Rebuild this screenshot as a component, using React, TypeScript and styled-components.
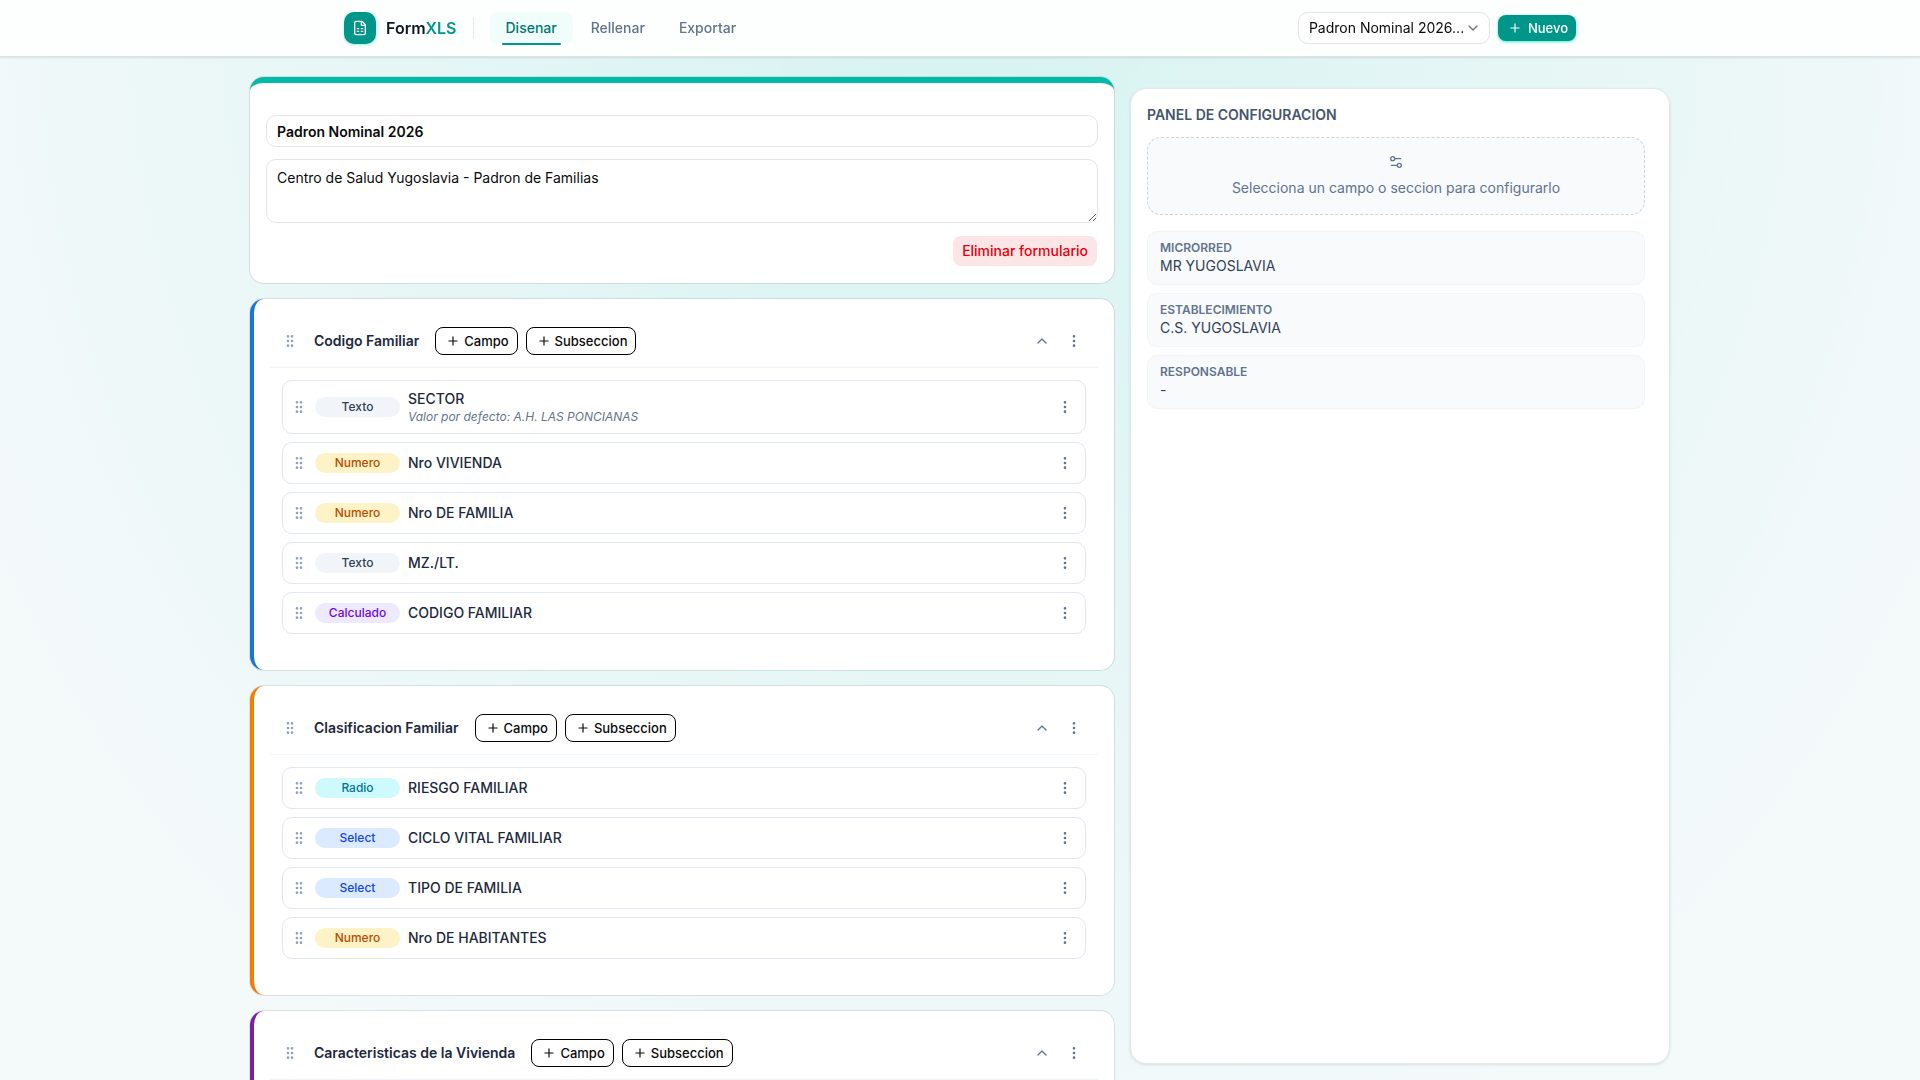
import React from "react";
import styled, { createGlobalStyle } from "styled-components";
import { ChevronDown, ChevronUp, EllipsisVertical, FileSpreadsheet, GripVertical, Plus, Settings2 } from "lucide-react";

const GlobalStyle = createGlobalStyle`
  *, *::before, *::after { box-sizing: border-box; }
  body {
    margin: 0;
    min-height: 100vh;
    color: #1d293d;
    font: 400 14px/20px Inter, "Liberation Sans", sans-serif;
    background: radial-gradient(ellipse 57% 116% at 50% 0, rgba(0, 200, 170, 0.12), transparent) #f4f9fa;
    background-attachment: fixed;
  }
  html, body { height: 100vh; overflow: hidden; }
  button, input, textarea, select { font: inherit; color: inherit; margin: 0; }
  h1, h2, p, dl, dd, ul { margin: 0; padding: 0; }
`;

const Header = styled.header`
  position: sticky;
  top: 0;
  z-index: 2;
  background: #fdfefe;
  border-bottom: 1px solid #dbe1e6;
  box-shadow: 0 1px 2px rgba(0, 0, 0, 0.1);
`;

const HeaderInner = styled.div`
  display: flex;
  align-items: center;
  max-width: 1280px;
  height: 56px;
  margin: 0 auto;
  padding: 0 24px;
`;

const Logo = styled.span`
  display: grid;
  place-items: center;
  width: 32px;
  height: 32px;
  border-radius: 10px;
  color: #fff;
  background: #009689;
  box-shadow: 0 1px 3px #96f7e4;
`;

const Brand = styled.strong`
  margin-left: 10px;
  font-size: 16px;
  font-weight: 600;
  color: #0f172b;
  span { color: #009689; }
`;

const Divider = styled.span`
  width: 1px;
  height: 20px;
  margin: 0 16px;
  background: #e2e8f0;
`;

const Tabs = styled.nav`
  display: flex;
  gap: 2px;
`;

const Tab = styled.a<{ $active?: boolean }>`
  position: relative;
  padding: 6px 16px;
  border-radius: 8px;
  font-weight: 500;
  text-decoration: none;
  color: ${(p) => (p.$active ? "#00786f" : "#62748e")};
  background: ${(p) => (p.$active ? "#f0fdfa" : "transparent")};
  &::after {
    content: "";
    display: ${(p) => (p.$active ? "block" : "none")};
    position: absolute;
    inset: auto 12px -1px;
    height: 2px;
    border-radius: 1px;
    background: #009689;
  }
`;

const Actions = styled.div`
  display: flex;
  align-items: center;
  gap: 8px;
  margin-left: auto;
`;

const PickerBox = styled.label`
  display: grid;
  grid-template-columns: 192px;
  align-items: center;
  > * { grid-area: 1 / 1; }
  svg { justify-self: end; margin-right: 9px; color: #737373; pointer-events: none; }
`;

const Picker = styled.select`
  appearance: none;
  width: 100%;
  height: 32px;
  padding: 0 20px 0 10px;
  border: 1px solid #e5e5e5;
  border-radius: 10px;
  color: #0a0a0a;
  background: #fff;
`;

const NewButton = styled.button`
  display: flex;
  align-items: center;
  gap: 6px;
  height: 26px;
  padding: 0 8px 0 10px;
  border: 0;
  border-radius: 8px;
  font-size: 13px;
  font-weight: 500;
  color: #fff;
  background: #009689;
  box-shadow: 0 1px 3px #46ecd5;
`;

const Main = styled.main`
  display: grid;
  grid-template-columns: 1.6fr 1fr;
  align-items: start;
  gap: 16px;
  max-width: 1452px;
  margin: 0 auto;
  padding: 20px 16px;
`;

const Column = styled.div`
  display: grid;
  gap: 16px;
  min-width: 0;
`;

const Card = styled.section`
  padding: 16px;
  border-radius: 14px;
  background: #fff;
  box-shadow: 0 0 0 1px rgba(10, 10, 10, 0.1);
`;

const FormCard = styled(Card)`
  display: grid;
  gap: 12px;
  padding-top: 32px;
  border-top: 6px solid #00bba7;
`;

const FormFooter = styled.footer`
  display: flex;
  justify-content: flex-end;
  padding: 1px;
`;

const TitleInput = styled.input`
  width: 100%;
  height: 32px;
  padding: 0 10px;
  border: 1px solid #e5e5e5;
  border-radius: 10px;
  font-weight: 600;
  color: #0a0a0a;
  background: #fff;
`;

const Description = styled.textarea`
  display: block;
  width: 100%;
  height: 64px;
  padding: 8px 10px;
  border: 1px solid #e5e5e5;
  border-radius: 10px;
  resize: vertical;
  color: #0a0a0a;
  background: #fff;
`;

const DeleteButton = styled.button`
  height: 30px;
  padding: 0 9px;
  border: 0;
  border-radius: 8px;
  font-weight: 500;
  color: #e7000b;
  background: #fce5e7;
`;

const SectionCard = styled(Card)<{ $accent: string }>`
  padding-bottom: 36px;
  border-left: 4px solid ${(p) => p.$accent};
`;

const SectionHeader = styled.header`
  display: flex;
  align-items: center;
  padding: 12px;
  border-bottom: 1px solid #f1f5f9;
`;

const SectionTitle = styled.h2`
  margin: 0 16px;
  font-size: 14px;
  line-height: 20px;
  font-weight: 600;
`;

const HeaderButtons = styled.div`
  display: flex;
  gap: 8px;
`;

const OutlineButton = styled.button`
  display: flex;
  align-items: center;
  gap: 4px;
  height: 28px;
  padding: 0 8px 0 10px;
  border: 1px solid #000;
  border-radius: 8px;
  font-size: 13px;
  font-weight: 500;
  color: #0a0a0a;
  background: #fff;
`;

const IconButton = styled.button`
  display: grid;
  place-items: center;
  width: 24px;
  height: 24px;
  padding: 0;
  border: 0;
  color: #62748e;
  background: none;
`;

const Handle = styled(IconButton)`
  width: 16px;
  color: #90a1b9;
  cursor: grab;
`;

const SectionTools = styled.div`
  display: flex;
  gap: 8px;
  margin-left: auto;
`;

const FieldList = styled.ul`
  display: grid;
  gap: 8px;
  padding: 12px 12px 0;
  list-style: none;
`;

const FieldRow = styled.li`
  display: flex;
  align-items: center;
  gap: 8px;
  min-height: 42px;
  padding: 8px;
  border: 1px solid #e2e8f0;
  border-radius: 10px;
  > :last-child { margin-left: auto; }
`;

const tones = {
  Texto: ["#314158", "#f1f5f9"],
  Numero: ["#bb4d00", "#fef3c6"],
  Calculado: ["#7008e7", "#ede9fe"],
  Radio: ["#007595", "#cefafe"],
  Select: ["#1447e6", "#dbeafe"],
};

type Kind = keyof typeof tones;

const Badge = styled.span<{ $kind: Kind }>`
  width: 85px;
  border-radius: 10px;
  font-size: 12px;
  font-weight: 500;
  text-align: center;
  color: ${(p) => tones[p.$kind][0]};
  background: ${(p) => tones[p.$kind][1]};
`;

const FieldText = styled.div`
  font-weight: 500;
`;

const Hint = styled.p`
  font-size: 12px;
  line-height: 16px;
  font-weight: 400;
  font-style: italic;
  color: #62748e;
`;

const Panel = styled.aside`
  height: calc(100vh - 104px);
  margin-top: 11px;
  padding: 16px 24px 16px 16px;
  border: 1px solid #e2e8f0;
  border-radius: 16px;
  background: #fff;
  box-shadow: 0 1px 3px rgba(0, 0, 0, 0.1);
`;

const PanelTitle = styled.h2`
  margin-bottom: 12px;
  font-size: 14px;
  line-height: 20px;
  font-weight: 600;
  color: #45556c;
`;

const EmptyState = styled.div`
  display: grid;
  justify-items: center;
  gap: 8px;
  margin-bottom: 16px;
  padding: 16px;
  border: 1px dashed #cad5e2;
  border-radius: 14px;
  color: #62748e;
  background: #f8fafc;
`;

const Facts = styled.dl`
  display: grid;
  gap: 8px;
`;

const Fact = styled.div`
  padding: 8px 12px;
  border: 1px solid #f1f5f9;
  border-radius: 10px;
  background: #f8fafc;
  dt { font-size: 12px; line-height: 16px; font-weight: 600; color: #62748e; }
  dd { color: #314158; }
`;

type Field = { kind: Kind; name: string; hint?: string };

const sections: { title: string; accent: string; fields: Field[] }[] = [
  {
    title: "Codigo Familiar",
    accent: "#1976d2",
    fields: [
      { kind: "Texto", name: "SECTOR", hint: "Valor por defecto: A.H. LAS PONCIANAS" },
      { kind: "Numero", name: "Nro VIVIENDA" },
      { kind: "Numero", name: "Nro DE FAMILIA" },
      { kind: "Texto", name: "MZ./LT." },
      { kind: "Calculado", name: "CODIGO FAMILIAR" },
    ],
  },
  {
    title: "Clasificacion Familiar",
    accent: "#f57c00",
    fields: [
      { kind: "Radio", name: "RIESGO FAMILIAR" },
      { kind: "Select", name: "CICLO VITAL FAMILIAR" },
      { kind: "Select", name: "TIPO DE FAMILIA" },
      { kind: "Numero", name: "Nro DE HABITANTES" },
    ],
  },
  { title: "Caracteristicas de la Vivienda", accent: "#7b1fa2", fields: [] },
];

const facts = [
  ["MICRORRED", "MR YUGOSLAVIA"],
  ["ESTABLECIMIENTO", "C.S. YUGOSLAVIA"],
  ["RESPONSABLE", "-"],
];

export default function App() {
  return (
    <>
      <GlobalStyle />
      <Header>
        <HeaderInner>
          <Logo><FileSpreadsheet size={16} /></Logo>
          <Brand>Form<span>XLS</span></Brand>
          <Divider />
          <Tabs>
            <Tab href="#disenar" $active>Disenar</Tab>
            <Tab href="#rellenar">Rellenar</Tab>
            <Tab href="#exportar">Exportar</Tab>
          </Tabs>
          <Actions>
            <PickerBox>
              <Picker aria-label="Formulario"><option>Padron Nominal 2026...</option></Picker>
              <ChevronDown size={16} />
            </PickerBox>
            <NewButton><Plus size={14} />Nuevo</NewButton>
          </Actions>
        </HeaderInner>
      </Header>
      <Main>
        <Column>
          <FormCard>
            <TitleInput aria-label="Titulo" defaultValue="Padron Nominal 2026" />
            <Description aria-label="Descripcion" defaultValue="Centro de Salud Yugoslavia - Padron de Familias" />
            <FormFooter>
              <DeleteButton>Eliminar formulario</DeleteButton>
            </FormFooter>
          </FormCard>
          {sections.map((section) => (
            <SectionCard key={section.title} $accent={section.accent}>
              <SectionHeader>
                <Handle aria-label="Mover seccion"><GripVertical size={16} /></Handle>
                <SectionTitle>{section.title}</SectionTitle>
                <HeaderButtons>
                  <OutlineButton><Plus size={14} />Campo</OutlineButton>
                  <OutlineButton><Plus size={14} />Subseccion</OutlineButton>
                </HeaderButtons>
                <SectionTools>
                  <IconButton aria-label="Contraer"><ChevronUp size={16} /></IconButton>
                  <IconButton aria-label="Opciones"><EllipsisVertical size={16} /></IconButton>
                </SectionTools>
              </SectionHeader>
              <FieldList>
                {section.fields.map((field) => (
                  <FieldRow key={field.name}>
                    <Handle aria-label="Mover campo"><GripVertical size={16} /></Handle>
                    <Badge $kind={field.kind}>{field.kind}</Badge>
                    <FieldText>
                      {field.name}
                      {field.hint && <Hint>{field.hint}</Hint>}
                    </FieldText>
                    <IconButton aria-label="Opciones"><EllipsisVertical size={16} /></IconButton>
                  </FieldRow>
                ))}
              </FieldList>
            </SectionCard>
          ))}
        </Column>
        <Panel>
          <PanelTitle>PANEL DE CONFIGURACION</PanelTitle>
          <EmptyState>
            <Settings2 size={16} />
            <p>Selecciona un campo o seccion para configurarlo</p>
          </EmptyState>
          <Facts>
            {facts.map(([label, value]) => (
              <Fact key={label}><dt>{label}</dt><dd>{value}</dd></Fact>
            ))}
          </Facts>
        </Panel>
      </Main>
    </>
  );
}
